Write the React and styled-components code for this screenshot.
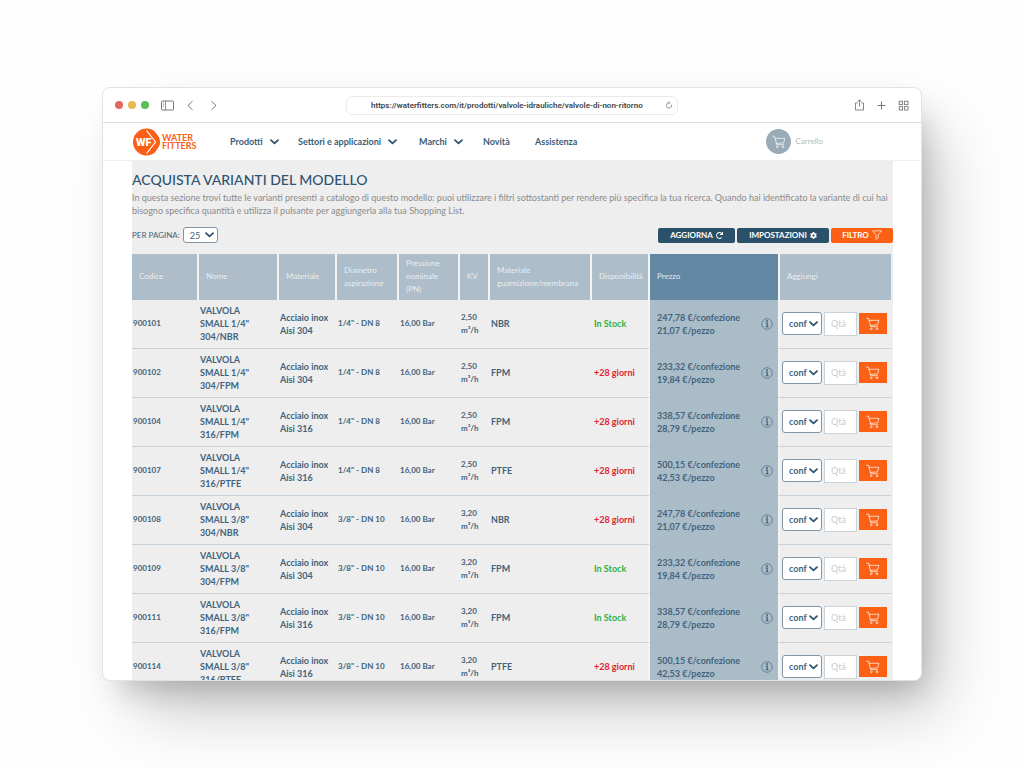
import React from 'react';
import styled, { createGlobalStyle } from 'styled-components';
import { FaCog, FaRedo } from 'react-icons/fa';

const GlobalStyle = createGlobalStyle`
  * {
    box-sizing: border-box;
  }

  body {
    margin: 0;
    background: #fefefe;
    color: #42637b;
    font-family: Lato, sans-serif;
    font-size: 9px;
    line-height: 13px;
  }

  button,
  input,
  select {
    margin: 0;
    font: inherit;
    color: inherit;
  }
`;

const Desktop = styled.div`
  display: flex;
  height: 100vh;
  padding: 87px 102px;
`;

const Browser = styled.div`
  display: flex;
  flex-direction: column;
  flex: 1;
  min-width: 0;
  overflow: hidden;
  background: white;
  border: 1px solid #e2e2e2;
  border-radius: 8px;
  box-shadow:
    10px 18px 30px -10px rgba(0, 0, 0, 0.22),
    26px 38px 64px -8px rgba(0, 0, 0, 0.2);
`;

const Chrome = styled.div`
  display: grid;
  grid-template-columns: 1fr 332px 1fr;
  align-items: center;
  flex: none;
  height: 35px;
  padding: 0 12px;
  border-bottom: 1px solid #dedede;
`;

const ChromeGroup = styled.div`
  display: flex;
  align-items: center;
  justify-content: ${({ $end }) => ($end ? 'flex-end' : 'flex-start')};
  gap: ${({ $end }) => ($end ? '11px' : '10px')};
`;

const Lights = styled.div`
  display: flex;
  gap: 5px;
  margin-right: 2px;
`;

const Light = styled.span`
  width: 8px;
  height: 8px;
  border-radius: 50%;
  background: ${({ color }) => color};
`;

const IconButton = styled.button`
  display: flex;
  padding: 0;
  border: 0;
  background: none;
  color: #777;
`;

const Address = styled.div`
  display: flex;
  align-items: center;
  height: 19px;
  padding: 0 4px 0 24px;
  border: 1px solid #eaeaea;
  border-radius: 6px;
`;

const AddressInput = styled.input`
  flex: 1;
  min-width: 0;
  padding: 0;
  border: 0;
  outline: none;
  background: none;
  color: #444;
  font-family: Roboto, sans-serif;
  font-size: 8px;
  font-weight: 600;
`;

const Header = styled.header`
  display: flex;
  align-items: center;
  flex: none;
  height: 38px;
  padding: 0 98px 0 30px;
  border-bottom: 1px solid #f0f0f0;
`;

const Logo = styled.a`
  display: flex;
  align-items: center;
  gap: 1px;
  width: 97px;
  color: #fb5f17;
  font-size: 9px;
  font-weight: 700;
  line-height: 8px;
  text-decoration: none;
`;

const LogoText = styled.span`
  display: flex;
  flex-direction: column;
`;

const Nav = styled.nav`
  display: grid;
  grid-template-columns: 68px 121px 64px 52px auto;
`;

const NavLink = styled.a`
  display: flex;
  align-items: center;
  gap: 7px;
  color: #3b5d77;
  font-weight: 700;
  text-decoration: none;
  white-space: nowrap;
`;

const CartLink = styled.a`
  display: flex;
  align-items: center;
  gap: 4px;
  margin-left: auto;
  color: #b5babd;
  font-size: 8px;
  text-decoration: none;
`;

const CartCircle = styled.span`
  display: flex;
  align-items: center;
  justify-content: center;
  width: 25px;
  height: 25px;
  border-radius: 50%;
  background: #9aabb8;
  color: white;
`;

const Main = styled.main`
  flex: 1;
  min-height: 0;
  margin: 0 28px 0 29px;
  padding-top: 9px;
  overflow: hidden;
  background: #eee;
`;

const Title = styled.h1`
  margin: 0;
  color: #2f5370;
  font-size: 14px;
  font-weight: 500;
  line-height: 20px;
`;

const Intro = styled.p`
  margin: 1px 0 10px;
  color: #8b8b8b;
`;

const Toolbar = styled.div`
  display: flex;
  align-items: center;
  gap: 2px;
  margin-bottom: 11px;
`;

const PerPage = styled.label`
  display: flex;
  align-items: center;
  gap: 3px;
  margin-right: auto;
  font-size: 8px;
`;

const SelectBox = styled.span`
  position: relative;
  display: inline-flex;
  width: ${({ $width }) => $width};
  height: ${({ $height }) => $height};

  svg {
    position: absolute;
    right: 4px;
    top: 50%;
    transform: translateY(-50%);
    pointer-events: none;
  }
`;

const Select = styled.select`
  appearance: none;
  width: 100%;
  padding: 0 0 0 6px;
  border: 1px solid #8096a8;
  border-radius: 3px;
  background: white;
  font-size: 9px;
  font-weight: ${({ $bold }) => ($bold ? 700 : 400)};
`;

const ToolButton = styled.button`
  display: flex;
  align-items: center;
  justify-content: center;
  gap: 3px;
  width: ${({ $width }) => $width};
  height: 15px;
  padding: 0;
  border: 0;
  border-radius: 2px;
  background: ${({ $accent }) => ($accent ? '#fb6014' : '#2b506a')};
  color: white;
  font-size: 8px;
  font-weight: 700;
`;

const Table = styled.table`
  table-layout: fixed;
  width: calc(100% - 2px);
  border-collapse: separate;
  border-spacing: 0;
`;

const HeadCell = styled.th`
  height: 46px;
  padding: 3px 7px 4px 7px;
  border-right: 2px solid #f4f4f4;
  background: ${({ $price }) => ($price ? '#6388a4' : '#adbdc9')};
  color: ${({ $price }) => ($price ? '#e4ebf0' : '#e9eef2')};
  font-size: 8px;
  font-weight: 400;
  text-align: left;

  &:last-child {
    border-right: 0;
  }
`;

const Cell = styled.td`
  height: 49px;
  padding: 4px 0 5px 1px;
  border-bottom: 1px solid #c6d0d8;
  font-size: ${({ $small }) => ($small ? '8px' : '9px')};
  font-weight: 700;
`;

const NameCell = styled(Cell)`
  padding-right: 20px;
`;

const StockCell = styled(Cell)`
  padding-left: 2px;
  border-right: 2px solid #f4f4f4;
  color: ${({ $available }) => ($available ? '#35b03b' : '#e01f35')};
`;

const PriceCell = styled(Cell)`
  padding-left: 7px;
  border-right: 2px solid #f4f4f4;
  border-bottom-color: #abbcc9;
  background: #abbcc9;
`;

const Price = styled.div`
  display: flex;
  align-items: center;
  justify-content: space-between;
  padding-right: 5px;
`;

const AddCell = styled(Cell)`
  padding-left: 2px;
`;

const AddForm = styled.div`
  display: flex;
  align-items: center;
  gap: 2px;
`;

const Quantity = styled.input`
  width: 33px;
  height: 24px;
  padding: 0 6px;
  border: 1px solid #ccd3d8;
  background: white;
  font-weight: 400;

  &::placeholder {
    color: #c6ccd1;
    opacity: 1;
  }
`;

const AddButton = styled.button`
  display: flex;
  align-items: center;
  justify-content: center;
  width: 28px;
  height: 21px;
  padding: 0;
  border: 0;
  background: #fb6014;
  color: white;
`;

const Chevron = () => (
  <svg width="9" height="6" viewBox="0 0 9 6" fill="none" stroke="#2f5370" strokeWidth="1.8">
    <path d="M1 1.2 4.5 4.4 8 1.2" strokeLinecap="round" strokeLinejoin="round" />
  </svg>
);

const Cart = () => (
  <svg width="14" height="14" viewBox="0 0 14 14" fill="none" stroke="currentColor" strokeWidth="0.7">
    <path d="M0.6 1.2h2l2.1 8.5h7M3.1 3.3h9.8l-1.3 4.6-7.3.5" strokeLinecap="round" strokeLinejoin="round" />
    <circle cx="5.3" cy="11.8" r="0.9" />
    <circle cx="11" cy="11.8" r="0.9" />
  </svg>
);

const Info = () => (
  <svg width="12" height="12" viewBox="0 0 12 12" fill="none" stroke="#3b5d77">
    <circle cx="6" cy="6" r="5.3" strokeWidth="0.6" />
    <path d="M4.8 5h1.4v3.6M4.7 8.8h2.8" strokeWidth="1.1" />
    <circle cx="6" cy="3" r="0.9" fill="#3b5d77" stroke="none" />
  </svg>
);

const Funnel = () => (
  <svg width="10" height="10" viewBox="0 0 10 10" fill="none" stroke="currentColor" strokeWidth="0.7">
    <path d="M0.6 0.8h8.8L6.2 4.9v2.8L4 9.3V4.9Z" strokeLinejoin="round" />
  </svg>
);

const LogoMark = () => (
  <svg width="28" height="28" viewBox="0 0 28 28">
    <circle cx="13.5" cy="14" r="13.5" fill="#fb5f17" />
    <path d="M19.5 0 29 13.5 20 28H28V0Z" fill="white" />
    <path d="M13.5 2.5 22.5 14 13.5 25.5" fill="none" stroke="white" strokeWidth="1.2" />
    <text x="3" y="18" fill="white" fontFamily="Roboto, sans-serif" fontSize="11" fontWeight="900">
      WF
    </text>
  </svg>
);

const columns = [
  { label: 'Codice', width: 67 },
  { label: 'Nome', width: 80 },
  { label: 'Materiale', width: 58 },
  { label: 'Diametro aspirazione', width: 62 },
  { label: 'Pressione nominale (PN)', width: 61 },
  { label: 'KV', width: 30 },
  { label: 'Materiale guarnizione/membrana', width: 102 },
  { label: 'Disponibilità', width: 58 },
  { label: 'Prezzo', width: 130, price: true },
  { label: 'Aggiungi', width: 111 },
];

const menu = [
  { label: 'Prodotti', sub: true },
  { label: 'Settori e applicazioni', sub: true },
  { label: 'Marchi', sub: true },
  { label: 'Novità' },
  { label: 'Assistenza' },
];

const products = [
  { code: '900101', size: '1/4"', steel: '304', seal: 'NBR', dn: 'DN 8', kv: '2,50', stock: true, pack: '247,78', piece: '21,07' },
  { code: '900102', size: '1/4"', steel: '304', seal: 'FPM', dn: 'DN 8', kv: '2,50', stock: false, pack: '233,32', piece: '19,84' },
  { code: '900104', size: '1/4"', steel: '316', seal: 'FPM', dn: 'DN 8', kv: '2,50', stock: false, pack: '338,57', piece: '28,79' },
  { code: '900107', size: '1/4"', steel: '316', seal: 'PTFE', dn: 'DN 8', kv: '2,50', stock: false, pack: '500,15', piece: '42,53' },
  { code: '900108', size: '3/8"', steel: '304', seal: 'NBR', dn: 'DN 10', kv: '3,20', stock: false, pack: '247,78', piece: '21,07' },
  { code: '900109', size: '3/8"', steel: '304', seal: 'FPM', dn: 'DN 10', kv: '3,20', stock: true, pack: '233,32', piece: '19,84' },
  { code: '900111', size: '3/8"', steel: '316', seal: 'FPM', dn: 'DN 10', kv: '3,20', stock: true, pack: '338,57', piece: '28,79' },
  { code: '900114', size: '3/8"', steel: '316', seal: 'PTFE', dn: 'DN 10', kv: '3,20', stock: false, pack: '500,15', piece: '42,53' },
];

const BrowserBar = () => (
  <Chrome>
    <ChromeGroup>
      <Lights>
        <Light color="#e0695f" />
        <Light color="#e9b84f" />
        <Light color="#5bbd55" />
      </Lights>
      <IconButton aria-label="Barra laterale">
        <svg width="13" height="11" viewBox="0 0 13 11" fill="none" stroke="currentColor">
          <rect x="0.5" y="1" width="12" height="9" rx="1" />
          <path d="M4.5 1v9M2 3h1M2 4.8h1M2 6.6h1" strokeWidth="0.8" />
        </svg>
      </IconButton>
      <IconButton aria-label="Indietro">
        <svg width="13" height="11" viewBox="0 0 13 11" fill="none" stroke="currentColor">
          <path d="M8.5 1.2 4 5.5l4.5 4.3" />
        </svg>
      </IconButton>
      <IconButton aria-label="Avanti">
        <svg width="13" height="11" viewBox="0 0 13 11" fill="none" stroke="currentColor">
          <path d="M4.5 1.2 9 5.5 4.5 9.8" />
        </svg>
      </IconButton>
    </ChromeGroup>
    <Address>
      <AddressInput
        aria-label="Indirizzo"
        defaultValue="https://waterfitters.com/it/prodotti/valvole-idrauliche/valvole-di-non-ritorno"
      />
      <IconButton aria-label="Ricarica">
        <svg width="8" height="8" viewBox="0 0 8 8" fill="none" stroke="currentColor" strokeWidth="0.7">
          <path d="M6.6 3.6A2.7 2.7 0 1 1 4.4 1.7M3.4.4l1.4 1.3-1.3 1.4" />
        </svg>
      </IconButton>
    </Address>
    <ChromeGroup $end>
      <IconButton aria-label="Condividi">
        <svg width="11" height="12" viewBox="0 0 11 12" fill="none" stroke="currentColor" strokeWidth="0.9">
          <path d="M3.6 4H1.5v7h8V4H7.4M5.5 7.5V1M3.5 2.8l2-2 2 2" />
        </svg>
      </IconButton>
      <IconButton aria-label="Nuova scheda">
        <svg width="11" height="11" viewBox="0 0 11 11" fill="none" stroke="currentColor">
          <path d="M5.5 1.5v8M1.5 5.5h8" />
        </svg>
      </IconButton>
      <IconButton aria-label="Panoramica">
        <svg width="11" height="11" viewBox="0 0 11 11" fill="none" stroke="currentColor" strokeWidth="0.9">
          <rect x="1.2" y="1.2" width="3.4" height="3.4" />
          <rect x="6.6" y="1.2" width="3.4" height="3.4" />
          <rect x="1.2" y="6.6" width="3.4" height="3.4" />
          <rect x="6.6" y="6.6" width="3.4" height="3.4" />
        </svg>
      </IconButton>
    </ChromeGroup>
  </Chrome>
);

const Row = ({ code, size, steel, seal, dn, kv, stock, pack, piece }) => (
  <tr>
    <Cell $small>{code}</Cell>
    <NameCell>{`VALVOLA SMALL ${size} ${steel}/${seal}`}</NameCell>
    <Cell>
      Acciaio inox
      <br />
      {`Aisi ${steel}`}
    </Cell>
    <Cell $small>{`${size} - ${dn}`}</Cell>
    <Cell $small>16,00 Bar</Cell>
    <Cell $small>
      {kv}
      <br />
      m³/h
    </Cell>
    <Cell>{seal}</Cell>
    <StockCell $available={stock}>{stock ? 'In Stock' : '+28 giorni'}</StockCell>
    <PriceCell>
      <Price>
        <span>
          {`${pack} €/confezione`}
          <br />
          {`${piece} €/pezzo`}
        </span>
        <Info />
      </Price>
    </PriceCell>
    <AddCell>
      <AddForm>
        <SelectBox $width="40px" $height="23px">
          <Select $bold aria-label={`Unità ${code}`}>
            <option>conf</option>
          </Select>
          <Chevron />
        </SelectBox>
        <Quantity placeholder="Qtà" aria-label={`Quantità ${code}`} />
        <AddButton aria-label={`Aggiungi ${code}`}>
          <Cart />
        </AddButton>
      </AddForm>
    </AddCell>
  </tr>
);

const App = () => (
  <Desktop>
    <GlobalStyle />
    <Browser>
      <BrowserBar />
      <Header>
        <Logo href="#">
          <LogoMark />
          <LogoText>
            <span>WATER</span>
            <span>FITTERS</span>
          </LogoText>
        </Logo>
        <Nav>
          {menu.map(({ label, sub }) => (
            <NavLink key={label} href="#">
              {label}
              {sub && <Chevron />}
            </NavLink>
          ))}
        </Nav>
        <CartLink href="#">
          <CartCircle>
            <Cart />
          </CartCircle>
          Carrello
        </CartLink>
      </Header>
      <Main>
        <Title>ACQUISTA VARIANTI DEL MODELLO</Title>
        <Intro>
          In questa sezione trovi tutte le varianti presenti a catalogo di questo modello: puoi utilizzare i filtri
          sottostanti per rendere più specifica la tua ricerca. Quando hai identificato la variante di cui hai bisogno
          specifica quantità e utilizza il pulsante per aggiungerla alla tua Shopping List.
        </Intro>
        <Toolbar>
          <PerPage>
            PER PAGINA:
            <SelectBox $width="35px" $height="16px">
              <Select>
                <option>25</option>
              </Select>
              <Chevron />
            </SelectBox>
          </PerPage>
          <ToolButton $width="77px">
            AGGIORNA <FaRedo size={7} />
          </ToolButton>
          <ToolButton $width="92px">
            IMPOSTAZIONI <FaCog size={7} />
          </ToolButton>
          <ToolButton $width="62px" $accent>
            FILTRO <Funnel />
          </ToolButton>
        </Toolbar>
        <Table>
          <colgroup>
            {columns.map(({ label, width }) => (
              <col key={label} style={{ width }} />
            ))}
          </colgroup>
          <thead>
            <tr>
              {columns.map(({ label, price }) => (
                <HeadCell key={label} $price={price}>
                  {label}
                </HeadCell>
              ))}
            </tr>
          </thead>
          <tbody>
            {products.map((product) => (
              <Row key={product.code} {...product} />
            ))}
          </tbody>
        </Table>
      </Main>
    </Browser>
  </Desktop>
);

export default App;
